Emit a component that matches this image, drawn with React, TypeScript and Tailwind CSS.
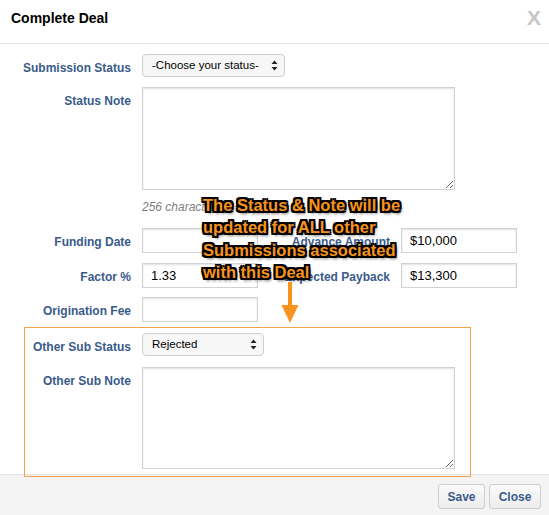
import React from 'react';

const labelCls = 'w-[131px] shrink-0 text-right pt-[6px] leading-[16px] text-[12px] font-bold text-[#3a5b8a]';

const SelectArrows = () => (
  <svg width="7" height="11" viewBox="0 0 7 11" className="shrink-0">
    <path d="M3.5 0.5 L6.5 4 L0.5 4 Z" fill="#222" />
    <path d="M3.5 10.5 L6.5 7 L0.5 7 Z" fill="#222" />
  </svg>
);

const FakeSelect = ({ text, width }: { text: string; width: string }) => (
  <div
    className={`${width} h-[23px] ml-[11px] flex items-center justify-between pl-[9px] pr-[6px] rounded-[4px] border border-[#cfcfcf] bg-[#f7f7f7] text-[11.5px] text-black`}
  >
    <span>{text}</span>
    <SelectArrows />
  </div>
);

const TextInput = ({ value, ml = 'ml-[11px]' }: { value: string; ml?: string }) => (
  <input
    readOnly
    value={value}
    className={`${ml} w-[116px] h-[25px] border border-[#d2d2d2] bg-white pl-[8px] text-[13px] text-black outline-none shadow-[inset_0_1px_2px_rgba(0,0,0,0.12)]`}
  />
);

const NoteArea = ({ h }: { h: string }) => (
  <textarea
    readOnly
    className={`ml-[11px] w-[313px] ${h} border border-[#d2d2d2] bg-white outline-none shadow-[inset_0_1px_2px_rgba(0,0,0,0.12)]`}
  />
);

export default function App() {
  return (
    <div className="relative w-[549px] h-[515px] bg-white overflow-hidden font-['Liberation_Sans',Arial,sans-serif]">
      {/* header */}
      <div className="h-[44px] border-b border-[#e6e6e6] flex justify-between pl-[11px] pr-[8px] pt-[9px]">
        <h1 className="text-[14px] leading-[18px] font-bold text-black">Complete Deal</h1>
        <span className="text-[21px] leading-[18px] font-bold text-[#c6c6c6]">X</span>
      </div>

      {/* body */}
      <div className="pt-[10px]">
        <div className="flex">
          <div className={labelCls}>Submission Status</div>
          <FakeSelect text="-Choose your status-" width="w-[143px]" />
        </div>

        <div className="flex mt-[10px]">
          <div className={labelCls}>Status Note</div>
          <NoteArea h="h-[103px]" />
        </div>

        <p className="ml-[142px] mt-[9px] leading-[17px] text-[12px] italic text-[#808080]">256 characters</p>

        <div className="flex mt-[12px]">
          <div className={labelCls}>Funding Date</div>
          <TextInput value="" />
          <div className="w-[132px] text-right pt-[6px] leading-[16px] text-[12px] font-bold text-[#3a5b8a]">Advance Amount</div>
          <TextInput value="$10,000" />
        </div>

        <div className="flex mt-[10px]">
          <div className={labelCls}>Factor %</div>
          <TextInput value="1.33" />
          <div className="w-[132px] text-right pt-[6px] leading-[16px] text-[12px] font-bold text-[#3a5b8a]">Expected Payback</div>
          <TextInput value="$13,300" />
        </div>

        <div className="flex mt-[9px]">
          <div className={labelCls}>Origination Fee</div>
          <TextInput value="" />
        </div>

        <div className="flex mt-[11px]">
          <div className={labelCls}>Other Sub Status</div>
          <FakeSelect text="Rejected" width="w-[122px]" />
        </div>

        <div className="flex mt-[11px]">
          <div className={labelCls}>Other Sub Note</div>
          <NoteArea h="h-[102px]" />
        </div>
      </div>

      {/* footer */}
      <div className="mt-[5px] h-[41px] border-t border-[#e3e3e3] bg-[#f4f4f4] flex justify-end gap-[4px] pr-[8px] pt-[9px]">
        <button className="w-[47px] h-[25px] rounded-[3px] border border-[#cdcdcd] bg-gradient-to-b from-[#fafafa] to-[#ededed] text-[12px] font-bold text-[#3a5b8a]">
          Save
        </button>
        <button className="w-[52px] h-[25px] rounded-[3px] border border-[#cdcdcd] bg-gradient-to-b from-[#fafafa] to-[#ededed] text-[12px] font-bold text-[#3a5b8a]">
          Close
        </button>
      </div>

      {/* annotation: highlight box */}
      <div className="pointer-events-none absolute left-[24px] top-[327px] w-[447px] h-[150px] border border-[#f5a24a]" />

      {/* annotation: callout text */}
      <div className="pointer-events-none absolute left-[203px] top-[194px] whitespace-nowrap text-[16.5px] leading-[22.3px] font-bold text-[#f7941d] [text-shadow:-2px_-2px_0_#000,2px_-2px_0_#000,-2px_2px_0_#000,2px_2px_0_#000,0_-2px_0_#000,0_2px_0_#000,-2px_0_0_#000,2px_0_0_#000,2px_3px_3px_rgba(0,0,0,0.6)]">
        The Status &amp; Note will be
        <br />
        updated for ALL other
        <br />
        Submissions associated
        <br />
        with this Deal
      </div>

      {/* annotation: arrow */}
      <svg className="pointer-events-none absolute left-[280px] top-[282px]" width="20" height="43" viewBox="0 0 20 43">
        <rect x="8" y="0" width="4" height="26" fill="#f7941d" />
        <path d="M1.5 23 L18.5 23 L10 41 Z" fill="#f7941d" />
      </svg>
    </div>
  );
}
